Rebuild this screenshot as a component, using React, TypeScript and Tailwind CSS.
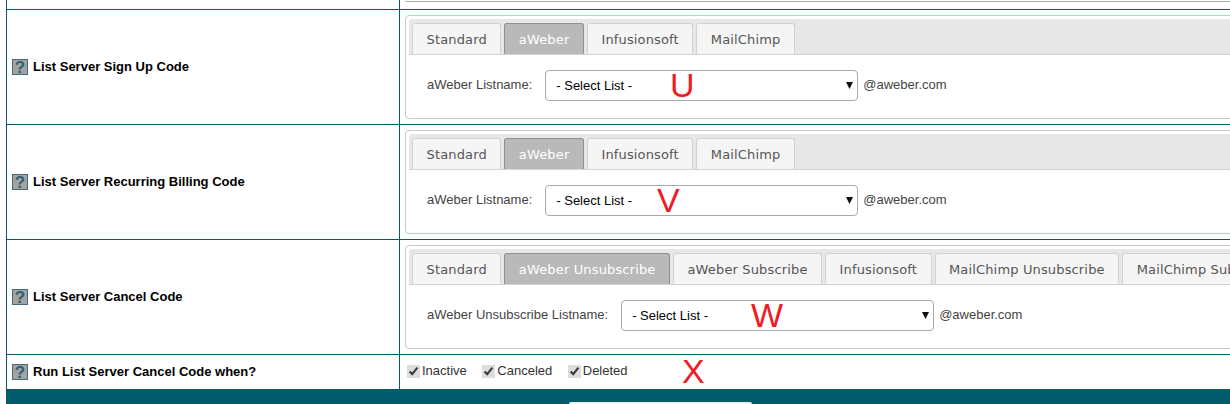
const tabFont = "font-['DejaVu_Sans','Verdana',sans-serif]";

function HelpIcon() {
  return (
    <span className="flex h-4 w-4 shrink-0 items-center justify-center border border-[#3f6b7a] bg-[#a3a3a3] font-['Liberation_Sans',sans-serif] text-[17px] leading-none text-[#2f5f70]">
      ?
    </span>
  );
}

function Tabs({ tabs, active }: { tabs: string[]; active: number }) {
  return (
    <div className="flex h-[36px] gap-[3px] rounded-t-[3px] border-b border-[#d3d3d3] bg-[#e7e7e7] pl-[3px] pt-[4px]">
      {tabs.map((t, i) => (
        <div
          key={t}
          className={`${tabFont} flex h-[31px] shrink-0 items-center whitespace-nowrap rounded-t-[3px] border border-b-0 px-[13.5px] pt-[1px] text-[13px] tracking-[0.15px] ${
            i === active
              ? "border-[#8f8f8f] bg-[#b9b9b9] text-white"
              : "border-[#d3d3d3] bg-[#f5f5f5] text-[#555]"
          }`}
        >
          {t}
        </div>
      ))}
    </div>
  );
}

function Row({
  title,
  tabs,
  label,
  letter,
  letterOffset,
}: {
  title: string;
  tabs: string[];
  label: string;
  letter: string;
  letterOffset: string;
}) {
  return (
    <div className="flex h-[115px] border-b border-[#005b6b]">
      <div className="flex w-[392px] shrink-0 items-center gap-[5px] pl-[5px] font-['Liberation_Sans',sans-serif] text-[13px] font-bold text-black">
        <HelpIcon />
        <span>{title}</span>
      </div>
      <div className="flex-1 border-l border-[#005b6b] pl-[5px] pt-[5px]">
        <div className="h-[104px] w-[900px] rounded-[4px] border border-[#c8c8c8] p-[3px]">
          <Tabs tabs={tabs} active={1} />
          <div className="relative flex items-center pl-[18px] pt-[15px] font-['Liberation_Sans',sans-serif] text-[13px] text-[#444]">
            <span className="relative top-[-1px] mr-[13px]">{label}</span>
            <span className="relative mr-[5px] flex">
              <select className="h-[31px] w-[313px] appearance-none rounded-[4px] border border-[#a9a9a9] bg-white pl-[10px] font-['Liberation_Sans',sans-serif] text-[13px] text-black">
                <option>- Select List -</option>
              </select>
              <svg viewBox="0 0 7 7" className="pointer-events-none absolute right-[5px] top-[12px] h-[7px] w-[7px]">
                <path d="M0 0H7L3.5 7Z" fill="#111" />
              </svg>
            </span>
            <span className="relative top-[-1px]">@aweber.com</span>
            <span className={`absolute top-[10px] font-['Liberation_Sans',sans-serif] text-[34px] leading-[40px] text-[#ee1c25] ${letterOffset}`}>
              {letter}
            </span>
          </div>
        </div>
      </div>
    </div>
  );
}

function Check({ label }: { label: string }) {
  return (
    <label className="flex items-center gap-[2px]">
      <input type="checkbox" defaultChecked readOnly className="m-0 h-[13px] w-[13px] accent-[#dddddd]" />
      <span>{label}</span>
    </label>
  );
}

export default function App() {
  return (
    <div className="h-[404px] w-[1230px] overflow-hidden bg-white pl-[6px]">
      <div className="w-[1300px] border-l border-[#005b6b]">
        <div className="flex h-[10px] border-b border-[#005b6b]">
          <div className="w-[392px] shrink-0" />
          <div className="flex-1 border-l border-[#005b6b] pl-[5px]">
            <div className="h-[2px] w-[900px] rounded-b-[4px] border-b border-[#a9a9a9]" />
          </div>
        </div>
        <Row
          title="List Server Sign Up Code"
          tabs={["Standard", "aWeber", "Infusionsoft", "MailChimp"]}
          label="aWeber Listname:"
          letter="U"
          letterOffset="left-[261px]"
        />
        <Row
          title="List Server Recurring Billing Code"
          tabs={["Standard", "aWeber", "Infusionsoft", "MailChimp"]}
          label="aWeber Listname:"
          letter="V"
          letterOffset="left-[248px]"
        />
        <Row
          title="List Server Cancel Code"
          tabs={["Standard", "aWeber Unsubscribe", "aWeber Subscribe", "Infusionsoft", "MailChimp Unsubscribe", "MailChimp Subscribe"]}
          label="aWeber Unsubscribe Listname:"
          letter="W"
          letterOffset="left-[342px]"
        />
        <div className="flex h-[34px]">
          <div className="flex w-[392px] shrink-0 items-center gap-[5px] pl-[5px] font-['Liberation_Sans',sans-serif] text-[13px] font-bold text-black">
            <HelpIcon />
            <span>Run List Server Cancel Code when?</span>
          </div>
          <div className="relative flex flex-1 items-center gap-[15.5px] border-l border-[#005b6b] pb-[2px] pl-[7px] font-['Liberation_Sans',sans-serif] text-[13px] text-[#333]">
            <Check label="Inactive" />
            <Check label="Canceled" />
            <Check label="Deleted" />
            <span className="absolute left-[282px] top-[-4px] text-[34px] leading-[40px] text-[#ee1c25]">X</span>
          </div>
        </div>
      </div>
      <div className="flex h-[15px] w-[1300px] justify-start bg-[#005b6b] pl-[563px] pt-[13px]">
        <div className="h-[2px] w-[183px] rounded-t-[4px] bg-[#f0f0f0]" />
      </div>
    </div>
  );
}
